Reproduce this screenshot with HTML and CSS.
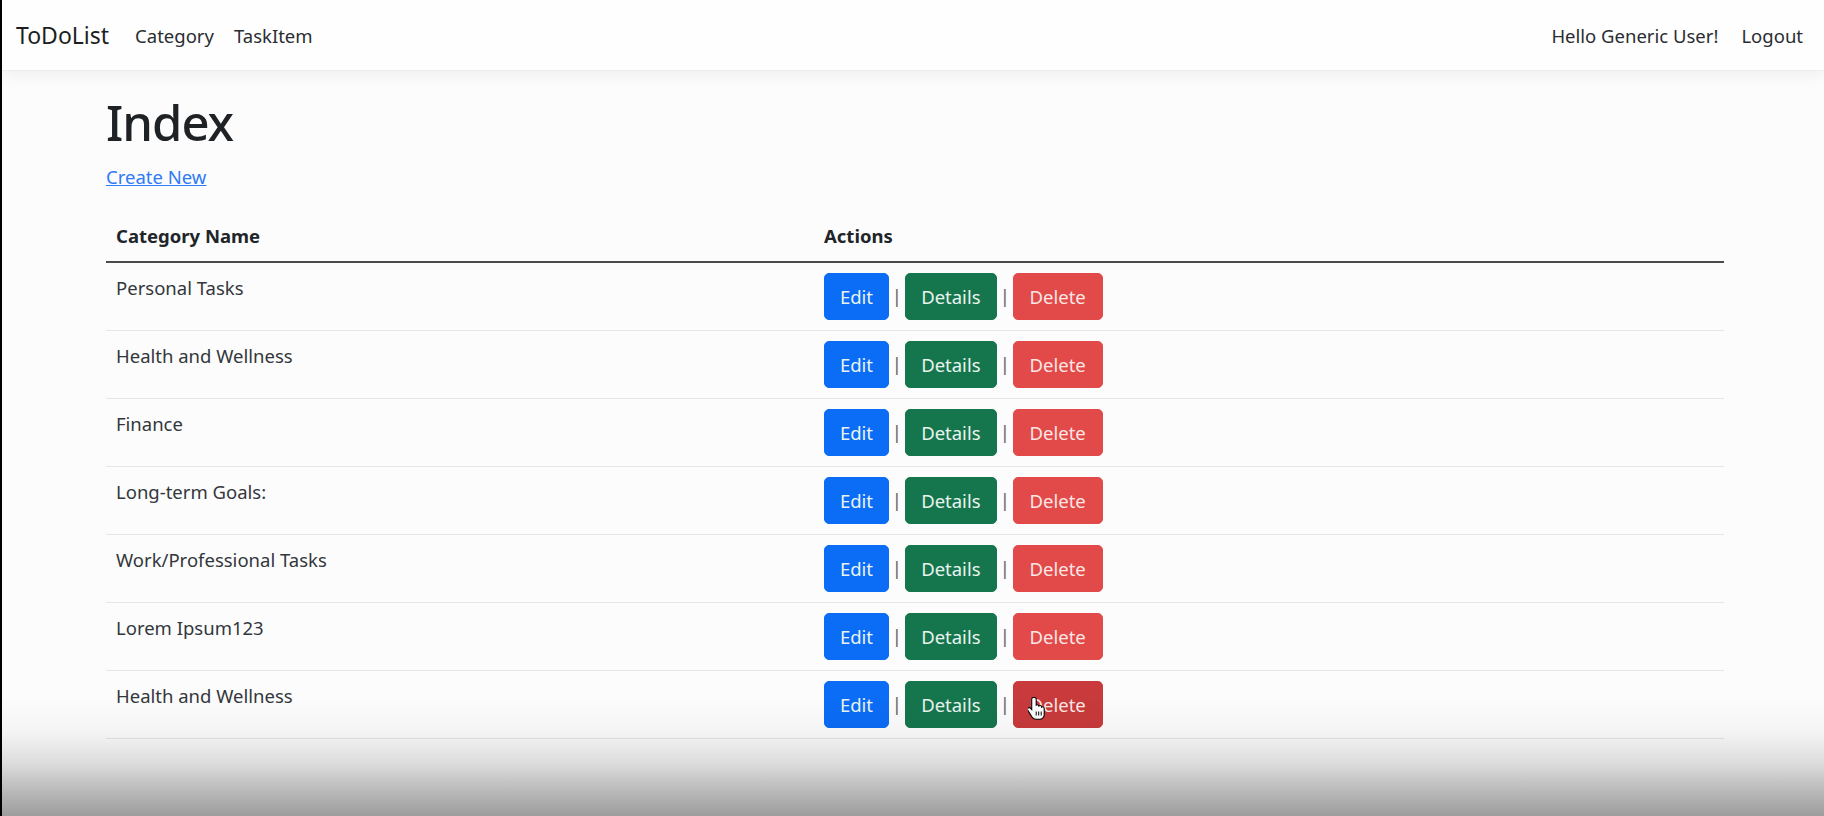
FILE: index.html
```html
<!DOCTYPE html>
<html lang="en">
<head>
<meta charset="utf-8">
<title>Index - ToDoList</title>
<link rel="stylesheet" href="styles.css">
</head>
<body>
<div class="frame">
  <header class="navbar">
    <div class="nav-left">
      <a class="brand" href="#">ToDoList</a>
      <a class="nav-link" href="#">Category</a>
      <a class="nav-link" href="#">TaskItem</a>
    </div>
    <div class="nav-right">
      <span class="nav-link">Hello Generic User!</span>
      <a class="nav-link" href="#">Logout</a>
    </div>
  </header>

  <main class="container">
    <h1 class="title">Index</h1>
    <p class="create"><a href="#">Create New</a></p>
    <table class="table">
      <thead>
        <tr><th class="col-name">Category Name</th><th>Actions</th></tr>
      </thead>
      <tbody>
        <tr><td>Personal Tasks</td><td class="actions"><a class="btn btn-primary" href="#">Edit</a> | <a class="btn btn-success" href="#">Details</a> | <a class="btn btn-danger" href="#">Delete</a></td></tr>
        <tr><td>Health and Wellness</td><td class="actions"><a class="btn btn-primary" href="#">Edit</a> | <a class="btn btn-success" href="#">Details</a> | <a class="btn btn-danger" href="#">Delete</a></td></tr>
        <tr><td>Finance</td><td class="actions"><a class="btn btn-primary" href="#">Edit</a> | <a class="btn btn-success" href="#">Details</a> | <a class="btn btn-danger" href="#">Delete</a></td></tr>
        <tr><td>Long-term Goals:</td><td class="actions"><a class="btn btn-primary" href="#">Edit</a> | <a class="btn btn-success" href="#">Details</a> | <a class="btn btn-danger" href="#">Delete</a></td></tr>
        <tr><td>Work/Professional Tasks</td><td class="actions"><a class="btn btn-primary" href="#">Edit</a> | <a class="btn btn-success" href="#">Details</a> | <a class="btn btn-danger" href="#">Delete</a></td></tr>
        <tr><td>Lorem Ipsum123</td><td class="actions"><a class="btn btn-primary" href="#">Edit</a> | <a class="btn btn-success" href="#">Details</a> | <a class="btn btn-danger" href="#">Delete</a></td></tr>
        <tr><td>Health and Wellness</td><td class="actions"><a class="btn btn-primary" href="#">Edit</a> | <a class="btn btn-success" href="#">Details</a> | <a class="btn btn-danger hover" href="#">Delete<svg class="cursor" width="18" height="26" viewBox="0 0 18 26"><path d="M5.5 1.5c-1 0-1.8.8-1.8 1.8v10.2l-1.2-1.3c-.7-.8-1.9-.8-2.6-.1-.6.6-.6 1.6-.1 2.3l4.2 6.6c.9 1.4 2.4 2.3 4.1 2.3h3.4c2.6 0 4.7-2.1 4.7-4.7v-6.2c0-.9-.7-1.6-1.6-1.6-.4 0-.7.1-1 .3 0-.9-.7-1.6-1.6-1.6-.5 0-.9.2-1.2.5-.2-.7-.8-1.2-1.6-1.2-.4 0-.7.1-1 .3V3.3c0-1-.8-1.8-1.7-1.8z" fill="#fff" stroke="#000" stroke-width="1.1"/><path d="M8.2 15.5v4M10.7 15.5v4M13.2 15.5v4" stroke="#000" stroke-width="1"/></svg></a></td></tr>
      </tbody>
    </table>
  </main>
  <div class="fade"></div>
</div>
</body>
</html>
```

FILE: styles.css
```css
* { box-sizing: border-box; }
html, body { margin: 0; padding: 0; }
body {
  font-family: "Noto Sans", "Open Sans", sans-serif;
  font-size: 19px;
  color: #212529;
  background: #fcfcfc;
  overflow: hidden;
}
.frame {
  position: relative;
  width: 1824px;
  height: 816px;
  border-left: 2px solid #000;
  overflow: hidden;
}
.navbar {
  height: 71px;
  background: #fefefe;
  border-bottom: 1px solid #eeeeee;
  box-shadow: 0 5px 15px rgba(0, 0, 0, 0.05);
  display: flex;
  align-items: center;
  justify-content: space-between;
  padding: 0 11px 0 14px;
}
.nav-left, .nav-right { display: flex; align-items: center; }
.brand {
  font-size: 23px;
  color: #1c1f22;
  text-decoration: none;
  margin-right: 16px;
}
.nav-link {
  font-size: 18.5px;
  color: #2a2d31;
  text-decoration: none;
  padding: 0 10px;
}
.nav-right .nav-link:first-child { margin-right: 3px; }
.container {
  width: 1618px;
  margin-left: 104px;
  padding-top: 21px;
}
.title {
  font-size: 49px;
  font-weight: 500;
  letter-spacing: -1px;
  line-height: 60px;
  margin: 0 0 10px;
  color: #1f2225;
}
.create { margin: 0 0 19px; line-height: 30px; font-size: 18.5px; }
.create a { color: #2f7bf5; text-decoration: underline; }
.table {
  width: 100%;
  border-collapse: collapse;
}
.table th {
  text-align: left;
  font-weight: 700;
  font-size: 18.5px;
  padding: 10px 10px;
  line-height: 30px;
  border-bottom: 2px solid #4a4a4a;
}
.col-name { width: 708px; }
.table td {
  padding: 10px 10px;
  vertical-align: top;
  line-height: 30px;
  font-size: 18.5px;
  border-bottom: 1px solid #e4e6e8;
  height: 68px;
  color: #33373b;
}
.table td.actions { color: #6a6460; white-space: nowrap; line-height: 46px; word-spacing: -2px; }
.btn {
  display: inline-block;
  vertical-align: top;
  height: 47px;
  line-height: 45px;
  border-radius: 5px;
  border: 1px solid transparent;
  color: #e9f4ee;
  text-decoration: none;
  font-size: 18.5px;
  word-spacing: normal;
  text-align: center;
  padding: 0;
  position: relative;
}
.btn-primary { background: #0b6cf6; border-color: #0b6cf6; width: 65px; }
.btn-success { background: #15754d; border-color: #15754d; width: 92px; }
.btn-danger { background: #e24a49; border-color: #e24a49; width: 90px; color: #fbe6e4; }
.btn-danger.hover { background: #c83a3b; border-color: #c83a3b; }
.cursor {
  position: absolute;
  left: 14px;
  top: 14px;
}
.fade {
  position: absolute;
  left: 0;
  right: 0;
  bottom: 0;
  height: 120px;
  pointer-events: none;
  background: linear-gradient(to bottom, rgba(0,0,0,0) 0%, rgba(0,0,0,0.03) 30%, rgba(0,0,0,0.12) 55%, rgba(0,0,0,0.27) 80%, rgba(0,0,0,0.38) 100%);
}
```
